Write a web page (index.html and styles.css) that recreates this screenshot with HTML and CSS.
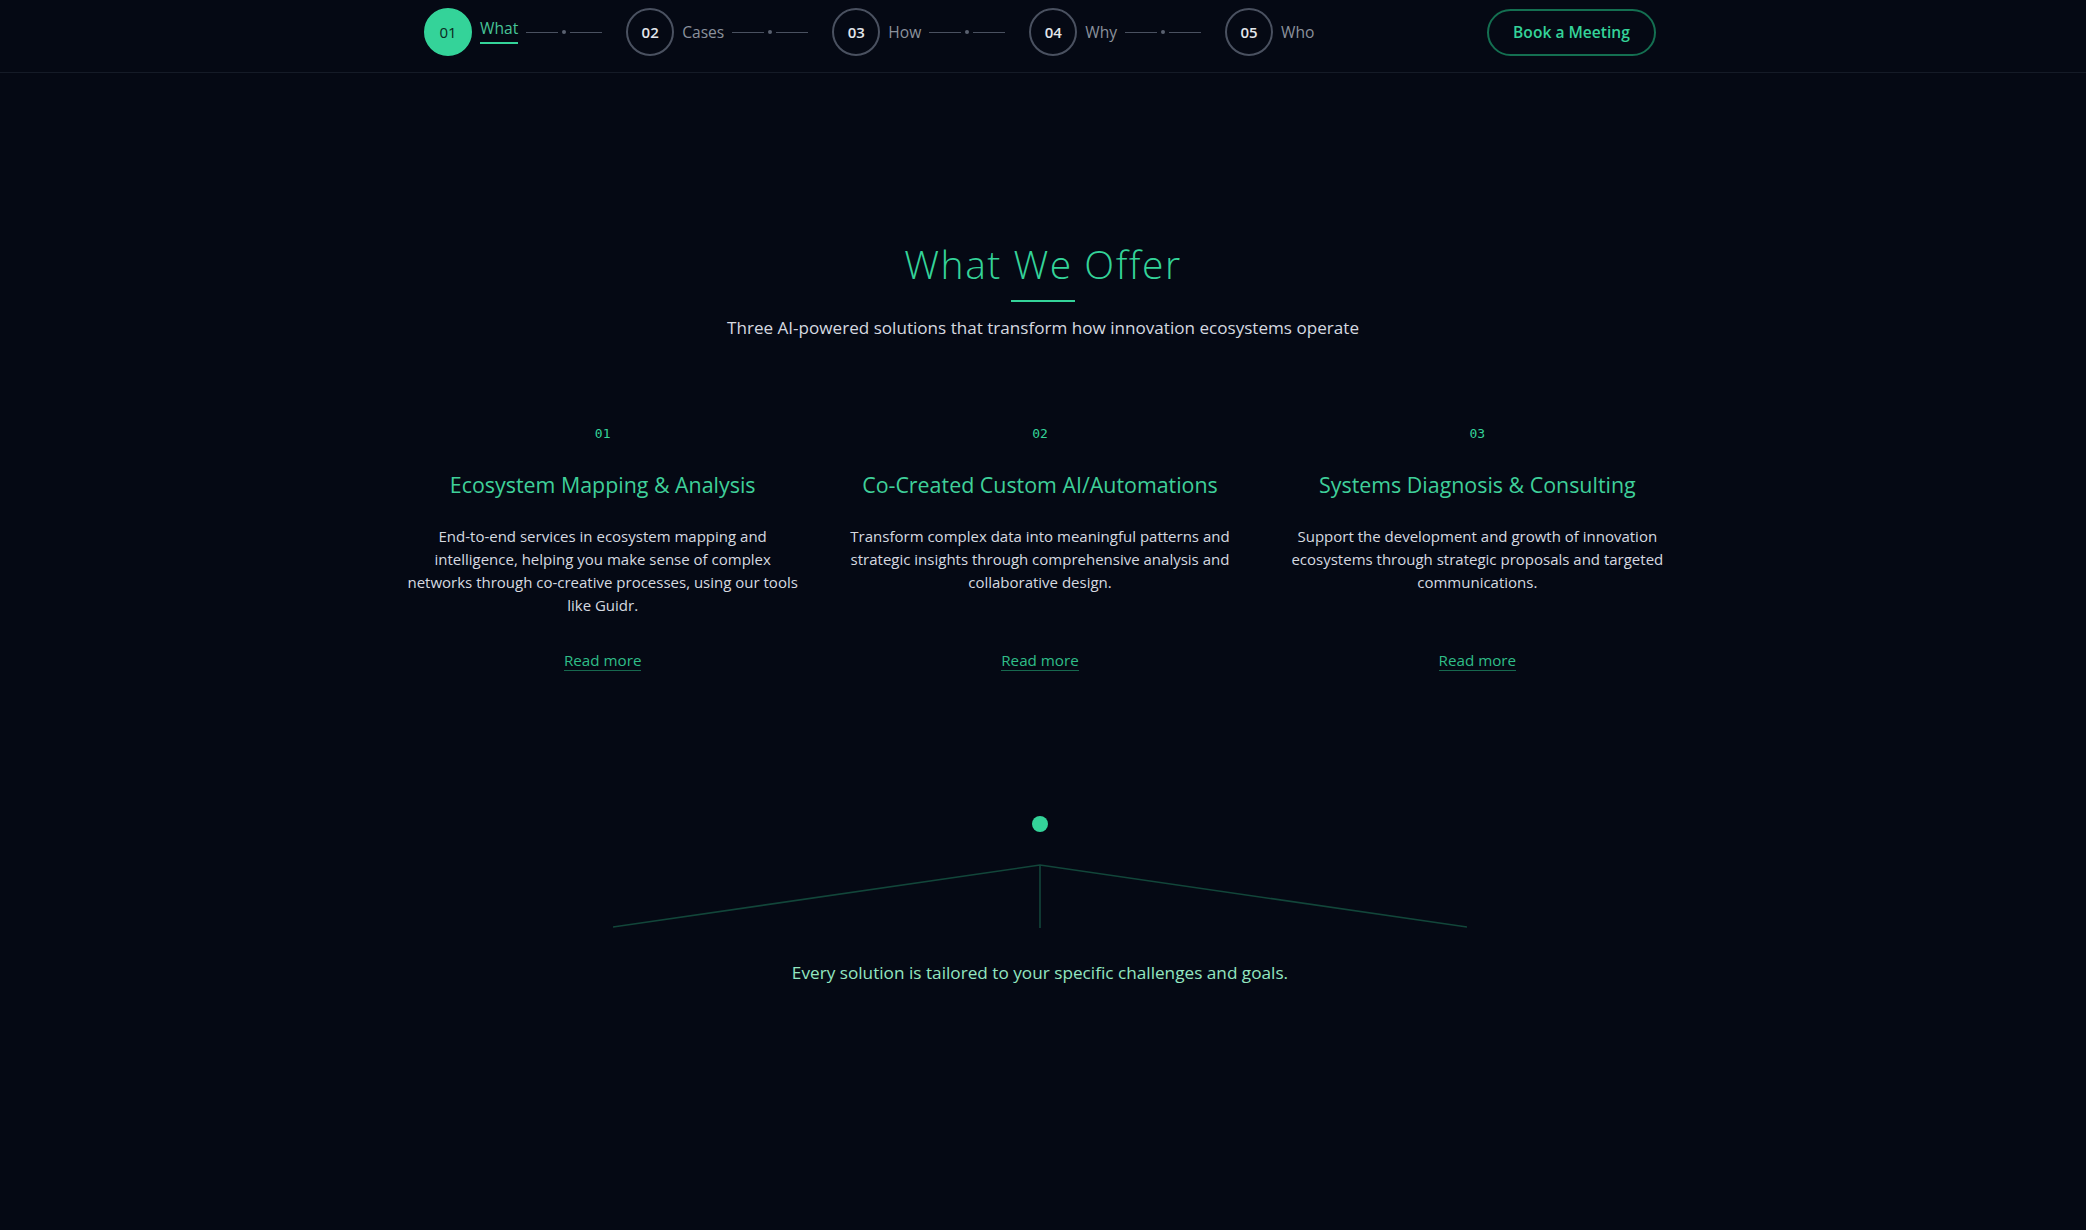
FILE: index.html
```html
<!DOCTYPE html>
<html lang="en">
<head>
<meta charset="utf-8">
<title>What We Offer</title>
<link rel="stylesheet" href="styles.css">
</head>
<body>
<header class="topbar">
  <div class="topbar-inner">
    <nav class="steps">
      <a class="step active" href="#what">
        <span class="step-num">01</span>
        <span class="step-label">What</span>
        <span class="connector"><i class="seg"></i><i class="knot"></i><i class="seg"></i></span>
      </a>
      <a class="step" href="#cases">
        <span class="step-num">02</span>
        <span class="step-label">Cases</span>
        <span class="connector"><i class="seg"></i><i class="knot"></i><i class="seg"></i></span>
      </a>
      <a class="step" href="#how">
        <span class="step-num">03</span>
        <span class="step-label">How</span>
        <span class="connector"><i class="seg"></i><i class="knot"></i><i class="seg"></i></span>
      </a>
      <a class="step" href="#why">
        <span class="step-num">04</span>
        <span class="step-label">Why</span>
        <span class="connector"><i class="seg"></i><i class="knot"></i><i class="seg"></i></span>
      </a>
      <a class="step" href="#who">
        <span class="step-num">05</span>
        <span class="step-label">Who</span>
      </a>
    </nav>
    <a class="book-btn" href="#book">Book a Meeting</a>
  </div>
</header>

<main class="offer" id="what">
  <h1 class="offer-title">What We Offer</h1>
  <div class="title-rule"></div>
  <p class="offer-sub">Three AI-powered solutions that transform how innovation ecosystems operate</p>

  <section class="cards">
    <article class="card">
      <div class="card-num">01</div>
      <h2 class="card-title">Ecosystem Mapping &amp; Analysis</h2>
      <p class="card-text">End-to-end services in ecosystem mapping and<br>intelligence, helping you make sense of complex<br>networks through co-creative processes, using our tools<br>like Guidr.</p>
      <a class="read-more" href="#mapping">Read more</a>
    </article>
    <article class="card">
      <div class="card-num">02</div>
      <h2 class="card-title">Co-Created Custom AI/Automations</h2>
      <p class="card-text">Transform complex data into meaningful patterns and<br>strategic insights through comprehensive analysis and<br>collaborative design.</p>
      <a class="read-more" href="#automations">Read more</a>
    </article>
    <article class="card">
      <div class="card-num">03</div>
      <h2 class="card-title">Systems Diagnosis &amp; Consulting</h2>
      <p class="card-text">Support the development and growth of innovation<br>ecosystems through strategic proposals and targeted<br>communications.</p>
      <a class="read-more" href="#consulting">Read more</a>
    </article>
  </section>

  <div class="tree">
    <span class="tree-dot"></span>
    <svg class="tree-lines" width="854" height="64" viewBox="0 0 854 64" aria-hidden="true">
      <polyline points="0,63 427,1 854,63" fill="none" stroke="#12463a" stroke-width="1.6"/>
      <line x1="427" y1="1" x2="427" y2="64" stroke="#12463a" stroke-width="1.6"/>
    </svg>
  </div>

  <p class="tailored">Every solution is tailored to your specific challenges and goals.</p>
</main>
</body>
</html>
```

FILE: styles.css
```css
* { box-sizing: border-box; }

html, body {
  margin: 0;
  padding: 0;
}

body {
  background: #050914;
  font-family: "Open Sans", "Noto Sans", "DejaVu Sans", sans-serif;
  color: #d3d7de;
  min-height: 1230px;
}

a { text-decoration: none; }

/* ---------- top bar ---------- */
.topbar {
  border-bottom: 1px solid #151b27;
}

.topbar-inner {
  width: 1232px;
  margin: 0 auto;
  height: 72px;
  padding: 8px 0 16px;
  display: flex;
  align-items: center;
  justify-content: space-between;
  position: relative;
  left: -3px;
}

.steps {
  display: flex;
  align-items: center;
  gap: 24px;
}

.step {
  display: flex;
  align-items: center;
  gap: 8px;
}

.step-num {
  width: 48px;
  height: 48px;
  border-radius: 50%;
  border: 2px solid #4a5160;
  display: flex;
  align-items: center;
  justify-content: center;
  font-size: 15px;
  font-weight: 600;
  color: #e3e6eb;
}

.step.active .step-num {
  background: #34d399;
  border-color: #34d399;
  color: #0b2a20;
  font-weight: 500;
}

.step-label {
  font-size: 15.6px;
  color: #8b919c;
  line-height: 22px;
}

.step.active .step-label {
  color: #47c497;
  border-bottom: 2px solid #34d399;
  padding-bottom: 3px;
  margin-top: -3px;
}

.connector {
  display: flex;
  align-items: center;
  gap: 4px;
}

.seg {
  display: block;
  width: 32px;
  height: 1px;
  background: #4a5160;
}

.knot {
  display: block;
  width: 4px;
  height: 4px;
  border-radius: 50%;
  background: #5a6170;
}

.book-btn {
  display: inline-flex;
  align-items: center;
  justify-content: center;
  width: 169px;
  height: 47px;
  border: 2px solid #146f51;
  border-radius: 24px;
  color: #34d399;
  font-size: 15.6px;
  font-weight: 600;
}

/* ---------- offer section ---------- */
.offer {
  display: flex;
  flex-direction: column;
  align-items: center;
  padding-top: 168px;
}

.offer-title {
  margin: 0;
  font-size: 39px;
  line-height: 46px;
  font-weight: 300;
  color: #34d399;
  letter-spacing: 1.5px;
}

.title-rule {
  width: 64px;
  height: 2px;
  background: #34d399;
  margin-top: 13px;
}

.offer-sub {
  margin: 13px 0 0;
  font-size: 17.1px;
  line-height: 26px;
  color: #d6dae0;
}

.cards {
  width: 1280px;
  margin-top: 83px;
  display: grid;
  grid-template-columns: repeat(3, 1fr);
  gap: 32px;
  position: relative;
  left: -3px;
}

.card {
  display: flex;
  flex-direction: column;
  align-items: center;
  text-align: center;
}

.card-num {
  font-family: "DejaVu Sans Mono", "Liberation Mono", monospace;
  font-size: 13px;
  line-height: 19px;
  color: #34d399;
}

.card-title {
  margin: 28px 0 0;
  font-size: 21.4px;
  line-height: 27px;
  font-weight: 400;
  color: #3fd09a;
}

.card-text {
  margin: 27px 0 0;
  font-size: 15px;
  line-height: 23px;
  color: #d6dae0;
}

.read-more {
  margin-top: auto;
  font-size: 15.2px;
  line-height: 20px;
  color: #2fbd88;
  border-bottom: 1px solid #17684f;
}

.card:first-child .read-more { margin-top: 33px; }

/* ---------- tree ---------- */
.tree {
  margin-top: 145px;
  display: flex;
  flex-direction: column;
  align-items: center;
  position: relative;
  left: -3px;
}

.tree-dot {
  display: block;
  width: 16px;
  height: 16px;
  border-radius: 50%;
  background: #34d399;
}

.tree-lines {
  display: block;
  margin-top: 32px;
}

.tailored {
  margin: 32px 0 0;
  font-size: 17.2px;
  line-height: 26px;
  color: #93e6c0;
  position: relative;
  left: -3px;
}
```
